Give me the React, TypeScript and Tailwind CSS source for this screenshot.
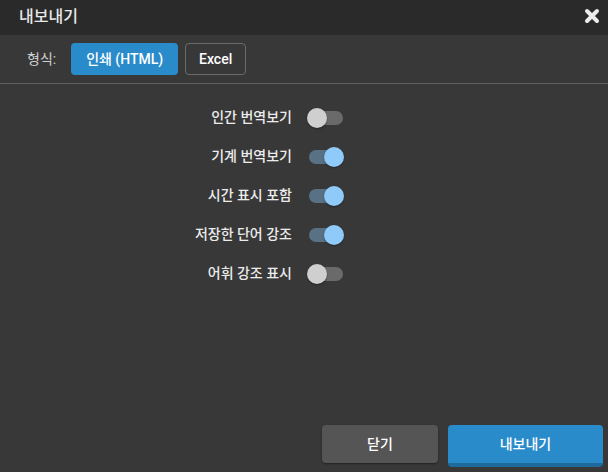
import React, { useState } from "react";

type Item = { label: string; on: boolean };

const items: Item[] = [
  { label: "인간 번역보기", on: false },
  { label: "기계 번역보기", on: true },
  { label: "시간 표시 포함", on: true },
  { label: "저장한 단어 강조", on: true },
  { label: "어휘 강조 표시", on: false },
];

function Toggle({ on, onClick }: { on: boolean; onClick: () => void }) {
  return (
    <button onClick={onClick} className="relative w-[37px] h-5 shrink-0">
      <span
        className={
          on
            ? "absolute left-[2px] top-[3px] w-[34px] h-[14px] rounded-full bg-[#587185]"
            : "absolute left-[2px] top-[3px] w-[34px] h-[14px] rounded-full bg-[#6a6a6a]"
        }
      />
      <span
        className={
          on
            ? "absolute top-0 left-[17px] size-5 rounded-full bg-[#90caf9] shadow-[0_1px_2px_rgba(0,0,0,0.35)]"
            : "absolute top-0 left-0 size-5 rounded-full bg-[#cfcfcf] shadow-[0_1px_2px_rgba(0,0,0,0.35)]"
        }
      />
    </button>
  );
}

export default function App() {
  const [opts, setOpts] = useState(items.map((i) => i.on));
  const [format, setFormat] = useState<"html" | "excel">("html");

  return (
    <div className="flex flex-col h-screen w-full bg-[#383838] text-[#e6e6e6] font-['Roboto','Noto_Sans_CJK_KR',sans-serif] overflow-hidden">
      <div className="flex items-center justify-between h-[35px] shrink-0 bg-[#2a2a2a] pl-[19px] pr-[4px]">
        <span className="text-[16px] font-medium text-[#e8e8e8] -mt-[2px]">내보내기</span>
        <svg width="16" height="16" viewBox="0 0 16 16" className="mr-[4px] -mt-[3px]">
          <path d="M3 3 L13 13 M13 3 L3 13" stroke="#ececec" strokeWidth="4" strokeLinecap="round" />
        </svg>
      </div>

      <div className="flex items-center h-[49px] shrink-0 pl-[27px] border-b border-[#5f5f5f]">
        <span className="text-[14px] text-[#cfcfcf] mr-[15px]">형식:</span>
        <button
          onClick={() => setFormat("html")}
          className={
            format === "html"
              ? "h-8 w-[107px] rounded-[4px] bg-[#2a8bcb] text-white text-[14px] font-medium"
              : "h-8 w-[107px] rounded-[4px] border border-[#6a6a6a] text-white text-[14px] font-medium"
          }
        >
          인쇄 (HTML)
        </button>
        <button
          onClick={() => setFormat("excel")}
          className={
            format === "excel"
              ? "ml-[7px] h-8 w-[61px] rounded-[4px] bg-[#2a8bcb] text-white text-[14px] font-medium"
              : "ml-[7px] h-8 w-[61px] rounded-[4px] border border-[#6a6a6a] text-white text-[14px] font-medium"
          }
        >
          Excel
        </button>
      </div>

      <div className="flex-1 pt-[14px]">
        {items.map((it, i) => (
          <div key={it.label} className="grid grid-cols-2 h-[39px] items-center">
            <span className="text-right pr-3 text-[14px] font-medium text-[#ececec]">{it.label}</span>
            <div className="pl-[3px] flex items-center">
              <Toggle
                on={opts[i]}
                onClick={() => setOpts(opts.map((v, j) => (j === i ? !v : v)))}
              />
            </div>
          </div>
        ))}
      </div>

      <div className="flex justify-end items-start gap-[10px] pr-[5px] pb-[5px] shrink-0">
        <button className="h-[38px] w-[116px] rounded-[4px] bg-[#555555] text-white text-[14px] font-medium shadow-[0_1px_2px_rgba(0,0,0,0.4)]">
          닫기
        </button>
        <button className="h-[42px] w-[155px] rounded-[4px] bg-[#2a8bcb] border-b-4 border-[#1f6a9c] text-white text-[14px] font-medium">
          내보내기
        </button>
      </div>
    </div>
  );
}
